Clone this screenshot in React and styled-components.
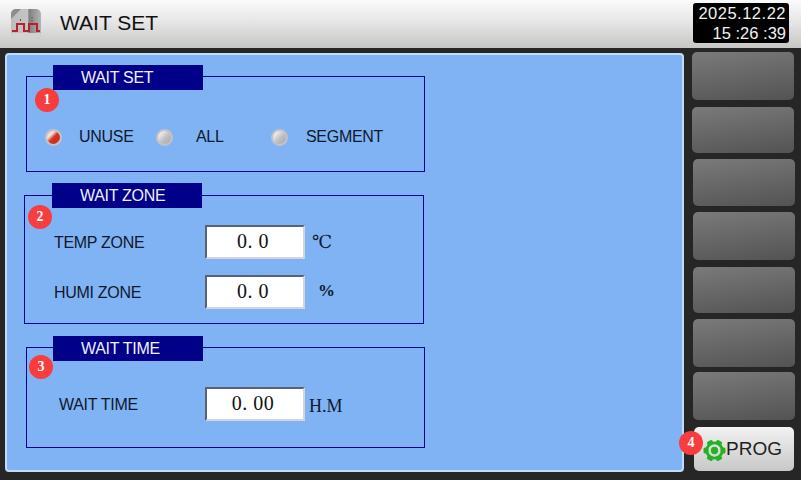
import styled, { createGlobalStyle } from 'styled-components';

const Global = createGlobalStyle`
  html, body {
    margin: 0;
    padding: 0;
    background: #262626;
  }
  * {
    box-sizing: border-box;
  }
`;

const Screen = styled.div`
  width: 801px;
  height: 480px;
  background: #262626;
  font-family: "Liberation Sans", Arial, sans-serif;
  color: #10182c;
  overflow: hidden;
`;

const Header = styled.header`
  height: 48px;
  padding: 0 12px 0 11px;
  display: flex;
  align-items: center;
  background: linear-gradient(#fbfbfb, #e6e6e6 45%, #c6c6c4);
`;

const HeaderIcon = styled.svg`
  width: 30px;
  height: 30px;
  flex: none;
`;

const HeaderTitle = styled.h1`
  margin: 0 0 2px 19px;
  font-size: 21px;
  font-weight: normal;
  color: #111;
  flex: 1;
`;

const Clock = styled.div`
  width: 96px;
  height: 40px;
  margin-bottom: 2px;
  padding-right: 3px;
  background: #000;
  border-radius: 3px;
  color: #f2f2f2;
  font-size: 16.5px;
  line-height: 20px;
  text-align: right;
`;

const ClockLine = styled.div`
  letter-spacing: ${(p) => p.$spacing}px;
  white-space: pre;
`;

const Body = styled.main`
  height: 432px;
  padding: 4px 6px 0 5px;
  display: flex;
  gap: 8px;
`;

const Panel = styled.section`
  width: 679px;
  height: 419px;
  margin-top: 1px;
  padding: 21px 0 0 19px;
  background: #7fb3f4;
  border: 2px solid #c2dcf8;
  border-radius: 4px;
  display: flex;
  flex-direction: column;
`;

const Group = styled.div`
  position: relative;
  width: ${(p) => p.$width}px;
  height: ${(p) => p.$height}px;
  margin: ${(p) => p.$top}px 0 0 ${(p) => p.$left}px;
  border: 1px solid #000088;
  padding: ${(p) => p.$padding};
`;

const GroupTitle = styled.div`
  position: absolute;
  left: ${(p) => p.$left || 26}px;
  top: ${(p) => p.$top || -12}px;
  width: 150px;
  height: 25px;
  padding-left: 28px;
  background: #000088;
  color: #f0f0ff;
  font-size: 16px;
  letter-spacing: -0.3px;
  line-height: 25px;
`;

const Badge = styled.span`
  position: absolute;
  left: ${(p) => p.$left}px;
  top: ${(p) => p.$top}px;
  width: 24px;
  height: 24px;
  border-radius: 50%;
  background: #f73d3d;
  color: #fff;
  font-family: "Liberation Serif", serif;
  font-size: 14px;
  font-weight: bold;
  line-height: 24px;
  text-align: center;
`;

const RadioRow = styled.div`
  display: flex;
  align-items: center;
  height: 24px;
`;

const Radio = styled.span`
  width: 17px;
  height: 17px;
  flex: none;
  border-radius: 50%;
  border: 2px solid #c4c2c8;
  background: ${(p) =>
    p.$on
      ? 'linear-gradient(135deg, #f6dcd6 30%, #d4391f 50%, #c9301c 75%, #e2928a)'
      : 'linear-gradient(135deg, #f0f0f0 15%, #c0c0c0 55%, #a8a8a8)'};
`;

const RadioLabel = styled.span`
  width: ${(p) => p.$width}px;
  margin-left: ${(p) => p.$left}px;
  font-size: 16px;
  letter-spacing: -0.3px;
  flex: none;
`;

const FieldRow = styled.div`
  display: flex;
  align-items: center;
  height: 36px;
  margin-bottom: ${(p) => p.$gap || 0}px;
`;

const FieldLabel = styled.span`
  width: ${(p) => p.$width}px;
  margin-top: 2px;
  font-size: 16px;
  letter-spacing: -0.3px;
  flex: none;
`;

const ValueBox = styled.div`
  width: 100px;
  height: 34px;
  flex: none;
  padding-right: 4px;
  background: #fff;
  border: 2px solid;
  border-color: #596375 #d2d6dc #d2d6dc #596375;
  color: #111;
  font-family: "Liberation Serif", serif;
  font-size: 20px;
  line-height: 28px;
  text-align: center;
  white-space: pre;
  letter-spacing: 0.5px;
`;

const Unit = styled.span`
  margin: ${(p) => p.$top || 0}px 0 0 ${(p) => p.$left}px;
  font-family: "Liberation Serif", "DejaVu Serif", serif;
  font-size: ${(p) => p.$size || 18}px;
  font-weight: ${(p) => (p.$bold ? 'bold' : 'normal')};
`;

const Side = styled.aside`
  width: 103px;
  position: relative;
  display: flex;
  flex-direction: column;
`;

const SideButton = styled.div`
  width: 102px;
  height: ${(p) => p.$height}px;
  margin: 0 0 ${(p) => p.$gap}px ${(p) => p.$left}px;
  border-radius: 5px;
  background: linear-gradient(172deg, #7a7a7a, #535353);
`;

const ProgButton = styled.div`
  width: 100px;
  height: 44px;
  margin-left: 2px;
  padding: 0 0 1px 9px;
  border-radius: 5px;
  background: linear-gradient(#f2f2f2, #c8c8c8);
  display: flex;
  align-items: center;
  color: #222;
  font-size: 19px;
`;

const Gear = styled.svg`
  width: 23px;
  height: 23px;
  flex: none;
  margin: 3px 0 0 0;
`;

const sideButtons = [
  [48, 7, 0],
  [46, 6, 0],
  [47, 6, 1],
  [48, 7, 1],
  [46, 6, 1],
  [48, 5, 1],
  [48, 7, 1],
];

const App = () => {
  const teeth = [30, 90, 150, 210, 270, 330];

  return (
    <Screen>
      <Global />
      <Header>
        <HeaderIcon viewBox="0 0 30 30">
          <defs>
            <linearGradient id="tile" x1="0" y1="0" x2="1" y2="0">
              <stop offset="0" stopColor="#bdbdbd" />
              <stop offset="0.55" stopColor="#c4c4c4" />
              <stop offset="0.6" stopColor="#808080" />
              <stop offset="1" stopColor="#b4b4b4" />
            </linearGradient>
          </defs>
          <rect width="30" height="30" rx="5" fill="url(#tile)" />
          <path d="M0 5 A5 5 0 0 1 5 0 H10 L0 10 Z" fill="#8c8c8c" />
          <path d="M0 24 H30 V25 A5 5 0 0 1 25 30 H5 A5 5 0 0 1 0 25 Z" fill="#d2d2d2" />
          <path
            d="M1 22 H6 V15 H13 V22 H18 V15 H26 V22 H29"
            fill="none"
            stroke="#b81f30"
            strokeWidth="2"
          />
          <path d="M9.5 10 V12 M21 8 V9.5 M21 11 V12.5" stroke="#7a4a4a" strokeWidth="1" />
        </HeaderIcon>
        <HeaderTitle>WAIT SET</HeaderTitle>
        <Clock>
          <ClockLine $spacing={0.5}>2025.12.22</ClockLine>
          <ClockLine $spacing={0}>{'15 :26 :39'}</ClockLine>
        </Clock>
      </Header>
      <Body>
        <Panel>
          <Group $width={399} $height={96} $top={0} $left={0} $padding="48px 0 0 18px">
            <GroupTitle>WAIT SET</GroupTitle>
            <Badge $left={8} $top={11}>1</Badge>
            <RadioRow>
              <Radio $on />
              <RadioLabel $width={77} $left={17}>UNUSE</RadioLabel>
              <Radio />
              <RadioLabel $width={75} $left={23}>ALL</RadioLabel>
              <Radio />
              <RadioLabel $width={90} $left={18}>SEGMENT</RadioLabel>
            </RadioRow>
          </Group>
          <Group $width={400} $height={129} $top={23} $left={-2} $padding="28px 0 0 29px">
            <GroupTitle $left={27} $top={-13}>WAIT ZONE</GroupTitle>
            <Badge $left={3} $top={9}>2</Badge>
            <FieldRow $gap={14}>
              <FieldLabel $width={151}>TEMP ZONE</FieldLabel>
              <ValueBox>{'0. 0'}</ValueBox>
              <Unit $left={7} $size={18}>℃</Unit>
            </FieldRow>
            <FieldRow>
              <FieldLabel $width={151}>HUMI ZONE</FieldLabel>
              <ValueBox>{'0. 0'}</ValueBox>
              <Unit $left={13} $size={17} $top={-2} $bold>%</Unit>
            </FieldRow>
          </Group>
          <Group $width={399} $height={101} $top={23} $left={0} $padding="38px 0 0 32px">
            <GroupTitle>WAIT TIME</GroupTitle>
            <Badge $left={2} $top={7}>3</Badge>
            <FieldRow>
              <FieldLabel $width={146}>WAIT TIME</FieldLabel>
              <ValueBox>{'0. 00'}</ValueBox>
              <Unit $left={4} $top={4}>H.M</Unit>
            </FieldRow>
          </Group>
        </Panel>
        <Side>
          {sideButtons.map(([height, gap, left], i) => (
            <SideButton key={i} $height={height} $gap={gap} $left={left} />
          ))}
          <ProgButton>
            <Gear viewBox="0 0 24 24">
              {teeth.map((a) => (
                <rect key={a} x="8.8" y="0.5" width="6.4" height="5" rx="1.6" fill="#22b322" transform={`rotate(${a} 12 12)`} />
              ))}
              <circle cx="12" cy="12" r="8" fill="none" stroke="#22b322" strokeWidth="3" />
              <circle cx="12" cy="12" r="3.8" fill="#22b322" />
            </Gear>
            PROG
          </ProgButton>
          <Badge $left={-13} $top={379}>4</Badge>
        </Side>
      </Body>
    </Screen>
  );
};

export default App;
